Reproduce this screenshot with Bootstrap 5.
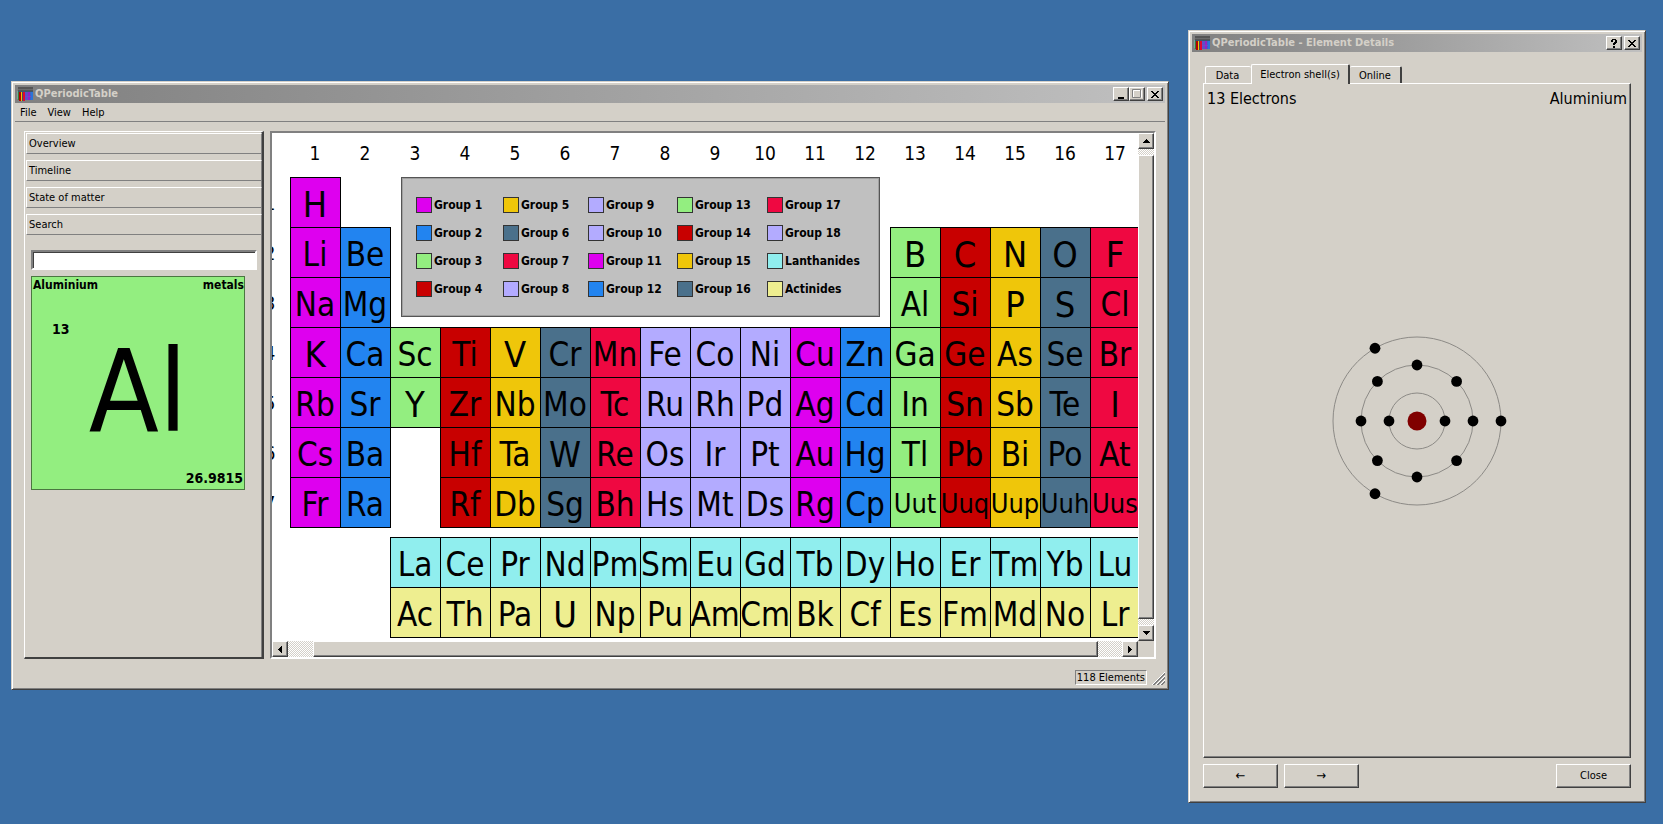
<!DOCTYPE html>
<html lang="en">
<head>
<meta charset="utf-8">
<meta name="viewport" content="width=device-width, initial-scale=1">
<title>QPeriodicTable</title>
<link rel="stylesheet" href="https://cdn.jsdelivr.net/npm/bootstrap@5.3.0/dist/css/bootstrap.min.css">
<style>
  :root { --face: #d4d0c8; --shade: #808080; --dark: #404040; }
  body {
    background: #3a6ea5; color: #000;
    font-family: "DejaVu Sans Condensed", "DejaVu Sans", sans-serif;
    font-size: 11px; line-height: 14px;
  }
  button, input { font: inherit; color: inherit; border-radius: 0; }
  .desktop { padding: 30px 17px 21px 11px; gap: 19px; }
  .raised {
    background: var(--face);
    border: 1px solid; border-color: #fff var(--dark) var(--dark) #fff;
    box-shadow: inset -1px -1px 0 var(--shade);
  }
  .sunken {
    border: 2px solid; border-color: var(--shade) #fff #fff var(--shade);
    box-shadow: inset 1px 1px 0 var(--dark);
  }
  .win {
    background: var(--face); padding: 3px;
    border: 1px solid; border-color: var(--face) var(--dark) var(--dark) var(--face);
    box-shadow: inset 1px 1px 0 #fff, inset -1px -1px 0 var(--shade);
  }
  .win-main { margin-top: 51px; min-width: 0; }
  .win-dialog { flex: 0 0 458px; }
  .titlebar {
    height: 18px; padding: 0 2px; color: var(--face);
    background: linear-gradient(90deg, #808080, #c0c0c0);
  }
  .titlebar h1 { font-size: 11px; line-height: 18px; font-weight: bold; margin: 0 0 0 2px; }
  .tbtn { width: 16px; height: 14px; padding: 0; }
  .tbtn svg, .sbtn svg { display: block; margin: auto; }
  .menubar { height: 19px; border-bottom: 1px solid var(--shade); padding: 0 5px; gap: 11px; }
  .menubar a { color: #000; text-decoration: none; line-height: 20px; }
  .work { padding: 9px 9px 0; gap: 6px; }
  .toolbox {
    flex: 0 0 240px; border: 2px solid; border-color: #fff var(--dark) var(--dark) #fff;
    border-left-width: 1px; border-top-width: 1px; padding: 1px 0 0 1px;
    box-shadow: inset -1px 0 0 var(--shade);
  }
  .toolbox-tabs { gap: 6px; }
  .toolbox-tab {
    height: 21px; padding: 1px 2px 0; text-align: left; background: var(--face);
    border: 1px solid; border-color: #fff var(--shade) var(--shade) #fff;
  }
  .search { padding: 15px 5px 0; }
  .search input { height: 20px; background: #fff; padding: 0 3px; }
  .tile {
    width: 214px; height: 214px; margin-top: 6px; background: #93ee80;
    border: 1px solid #4a7740; font-size: 12px; line-height: 16px; font-weight: bold;
  }
  .tile-head { padding: 0 0 0 1px; }
  .tile-num { font-size: 14px; padding-left: 20px; margin-top: 28px; }
  .tile-sym { font-size: 114px; line-height: 110px; font-weight: normal; }
  .tile-mass { font-size: 14px; padding: 0 1px 3px; }
  .view { background: var(--face); }
  .viewport { background: #fff; overflow: hidden; }
  .scene { margin-left: -32px; width: 900px; padding-bottom: 4px; }
  .elements { border-collapse: separate; border-spacing: 0; table-layout: fixed; width: 900px; line-height: 1; }
  .elements th, .elements td { width: 50px; padding: 0; text-align: center; vertical-align: middle; font-weight: normal; white-space: nowrap; }
  .elements thead th { height: 44px; font-size: 19px; padding-bottom: 3px; }
  .elements tbody tr { height: 50px; }
  .elements tbody th { font-size: 19px; padding: 2px 0 0 10px; }
  .elements tbody tr.gap-row { height: 10px; }
  .elements td.el { font-size: 33px; padding-top: 5px; box-shadow: inset 1px 1px 0 #000, 1px 0 0 #000, 0 1px 0 #000, 1px 1px 0 #000; }
  .elements td.n1 { font-size: 36px; }
  .elements td.n3 { font-size: 27px; padding-top: 3px; }
  .c-mag { background: #de00ef; } .c-blue { background: #2284f0; } .c-green { background: #93ee80; }
  .c-red { background: #c80000; } .c-yel { background: #efc60a; } .c-slate { background: #4a708b; }
  .c-crim { background: #ef0841; } .c-lav { background: #b3abff; }
  .c-lan { background: #90eeee; } .c-act { background: #eeee90; }
  .legend {
    left: 161px; top: 44px; width: 479px; height: 140px; padding: 19px 14px;
    background: #c0c0c0; border: 1px solid #555; box-shadow: inset 0 0 0 1px #a0a0a0;
    display: grid; grid-auto-flow: column; grid-template-rows: repeat(4, 16px);
    grid-template-columns: 87px 85px 89px 90px auto; row-gap: 12px;
    font-size: 12px; line-height: 16px; font-weight: bold; white-space: nowrap;
  }
  .swatch { width: 16px; height: 16px; border: 1px solid #333; margin-right: 2px; }
  .track { background: repeating-conic-gradient(#fff 0 25%, #d4d0c8 0 50%) 0 0 / 2px 2px; }
  .vbar { width: 16px; } .hbar { height: 16px; }
  .sbtn { width: 16px; height: 16px; padding: 0; flex: none; }
  .vthumb { margin: 6px 0; } .hthumb { margin: 0 24px 0 25px; }
  .corner { width: 16px; }
  .statusbar { padding: 11px 0 0; height: 27px; }
  .status-text { height: 15px; padding: 0 1px; margin-right: 5px; border: 1px solid; border-color: var(--shade) #fff #fff var(--shade); }
  .dialog-body { padding: 12px 11px 11px; }
  .tabs { padding-left: 2px; height: 19px; }
  .tabs button { background: var(--face); border: 1px solid; border-color: #fff var(--dark) transparent #fff; border-bottom: 0; border-radius: 2px 2px 0 0; padding: 0 8px; height: 17px; line-height: 18px; }
  .tabs .t-data { width: 46px; border-right: 0; padding: 0 6px 0 4px; }
  .tabs .t-shell { width: 99px; height: 20px; margin-bottom: -1px; z-index: 1; border-right-width: 2px; line-height: 20px; }
  .tabs .t-online { width: 52px; border-left: 0; border-right-width: 2px; }
  .pane { display: grid; }
  .pane > * { grid-area: 1 / 1; }
  .pane-head { font-size: 16px; line-height: 20px; padding: 5px 3px; }
  .push { width: 75px; height: 24px; padding: 0; }
  .arrow-btn { font-size: 13px; }
  .footer-row { gap: 6px; margin-top: 6px; }
</style>
</head>
<body>
<svg width="0" height="0" class="position-absolute" aria-hidden="true">
  <symbol id="app" viewBox="0 0 16 14">
    <rect x="1" width="15" height="5" fill="#555"/><rect x="1" y="2" width="15" height="1" fill="#6b6b6b"/>
    <rect x="1" y="4" width="15" height="1" fill="#3a5570"/>
    <rect y="4" width="1" height="8" fill="#7a9"/><rect x="1" y="5" width="1" height="8" fill="#397a35"/>
    <rect x="2" y="5" width="2" height="9" fill="#b50000"/><rect x="4" y="5" width="1" height="9" fill="#efc60a"/>
    <rect x="5" y="5" width="1" height="9" fill="#4a4a5b"/><rect x="6" y="5" width="2" height="9" fill="#e00830"/>
    <rect x="8" y="5" width="3" height="8" fill="#5c50c8"/><rect x="11" y="5" width="2" height="8" fill="#9a20c0"/>
    <rect x="13" y="5" width="1" height="8" fill="#3b62c8"/><rect x="14" y="5" width="2" height="8" fill="#2a73d8"/>
    <rect x="8" y="9" width="6" height="1" fill="#7a40c8"/>
  </symbol>
  <symbol id="cross" viewBox="0 0 8 7"><path shape-rendering="crispEdges" d="M0 0h2v1h1v1h2V1h1V0h2v1H7v1H6v1H5v1h1v1h1v1h1v1H6V6H5V5H3v1H2v1H0V6h1V5h1V4h1V3H2V2H1V1H0z"/></symbol>
</svg>

<div class="desktop d-flex min-vh-100">
  <main class="win win-main flex-fill align-self-start">
    <header class="titlebar d-flex align-items-center">
      <svg width="16" height="14"><use href="#app"/></svg>
      <h1 class="flex-fill">QPeriodicTable</h1>
      <button class="raised tbtn" aria-label="Minimize"><svg width="12" height="10"><path d="M3 8h6v2H3z"/></svg></button>
      <button class="raised tbtn" aria-label="Maximize"><svg width="12" height="10"><path d="M2.500 1.500h8v7h-8z" fill="none" stroke="#fff"/><path d="M1.500 .5h8v8h-8z" fill="none" stroke="#808080"/></svg></button>
      <button class="raised tbtn" style="margin-left:2px" aria-label="Close"><svg width="8" height="7"><use href="#cross"/></svg></button>
    </header>
    <nav class="menubar d-flex"><a href="#">File</a><a href="#">View</a><a href="#">Help</a></nav>
    <div class="work d-flex">
      <aside class="toolbox">
        <div class="toolbox-tabs d-flex flex-column">
          <button class="toolbox-tab">Overview</button>
          <button class="toolbox-tab">Timeline</button>
          <button class="toolbox-tab">State of matter</button>
          <button class="toolbox-tab">Search</button>
        </div>
        <div class="search">
          <input class="sunken d-block w-100" type="text" aria-label="Search">
          <section class="tile d-flex flex-column">
            <div class="tile-head d-flex justify-content-between"><span>Aluminium</span><span>metals</span></div>
            <div class="tile-num">13</div>
            <div class="tile-sym text-center">Al</div>
            <div class="tile-mass text-end mt-auto">26.9815</div>
          </section>
        </div>
      </aside>
      <section class="view sunken flex-fill d-flex flex-column overflow-hidden">
        <div class="d-flex">
          <div class="viewport flex-fill">
            <div class="scene position-relative">
              <table class="elements" id="elements"></table>
              <ul class="legend position-absolute list-unstyled m-0" id="legend"></ul>
            </div>
          </div>
          <div class="vbar track d-flex flex-column flex-shrink-0">
            <button class="raised sbtn" aria-label="Scroll up"><svg width="7" height="4"><path d="M3 0h1v1h1v1h1v1h1v1H0V3h1V2h1V1h1z"/></svg></button>
            <div class="raised vthumb flex-fill"></div>
            <button class="raised sbtn" aria-label="Scroll down"><svg width="7" height="4"><path d="M0 0h7v1H6v1H5v1H4v1H3V3H2V2H1V1H0z"/></svg></button>
          </div>
        </div>
        <div class="d-flex">
          <div class="hbar track d-flex flex-fill">
            <button class="raised sbtn" aria-label="Scroll left"><svg width="4" height="7"><path d="M4 0v7H3V6H2V5H1V4H0V3h1V2h1V1h1V0z"/></svg></button>
            <div class="raised hthumb flex-fill"></div>
            <button class="raised sbtn" aria-label="Scroll right"><svg width="4" height="7"><path d="M0 0v7h1V6h1V5h1V4h1V3H3V2H2V1H1V0z"/></svg></button>
          </div>
          <div class="corner"></div>
        </div>
      </section>
    </div>
    <footer class="statusbar d-flex justify-content-end">
      <div class="status-text">118 Elements</div>
      <svg width="13" height="14" aria-hidden="true" style="margin-top:2px">
        <path d="M0 13 13 0M4 13l9-9M8 13l5-5" stroke="#fff"/>
        <path d="M1 13 13 1M2 13 13 2M5 13l8-8M6 13l7-7M9 13l4-4M10 13l3-3" stroke="#808080"/>
      </svg>
    </footer>
  </main>

  <section class="win win-dialog d-flex flex-column">
    <header class="titlebar d-flex align-items-center">
      <svg width="16" height="14"><use href="#app"/></svg>
      <h1 class="flex-fill">QPeriodicTable - Element Details</h1>
      <button class="raised tbtn" aria-label="Help"><svg width="7" height="9" shape-rendering="crispEdges"><path d="M1 0h4v1h1v3H5v1H4v1H2V4h1V3h1V1H2v2H0V1h1zM2 7h2v2H2z"/></svg></button>
      <button class="raised tbtn" style="margin-left:2px" aria-label="Close"><svg width="8" height="7"><use href="#cross"/></svg></button>
    </header>
    <div class="dialog-body d-flex flex-column flex-fill">
      <div class="tabs d-flex align-items-end" role="tablist">
        <button class="t-data" role="tab">Data</button>
        <button class="t-shell position-relative" role="tab" aria-selected="true">Electron shell(s)</button>
        <button class="t-online" role="tab">Online</button>
      </div>
      <div class="pane raised flex-fill" role="tabpanel">
        <div class="pane-head d-flex justify-content-between align-self-start"><span>13 Electrons</span><span>Aluminium</span></div>
        <svg class="m-auto" width="180" height="180" viewBox="-90 -90 180 180" role="img" aria-label="Electron shells 2, 8, 3">
          <g fill="none" stroke="#8c8a86"><circle r="28"/><circle r="56"/><circle r="84"/></g>
          <circle r="9.500" fill="#800000"/>
          <g id="electrons"></g>
        </svg>
      </div>
      <div class="footer-row d-flex align-items-start">
        <button class="raised push arrow-btn" aria-label="Previous">←</button>
        <button class="raised push arrow-btn" aria-label="Next">→</button>
        <button class="raised push ms-auto">Close</button>
      </div>
    </div>
  </section>
</div>

<script>
  const groups = ["mag","blue","green","red","yel","slate","crim","lav","lav","lav","mag","blue","green","red","yel","slate","crim","lav"];
  // One string per period; a dot is an empty place.
  const periods = [
    "H . . . . . . . . . . . . . . . .",
    "Li Be . . . . . . . . . . B C N O F",
    "Na Mg . . . . . . . . . . Al Si P S Cl",
    "K Ca Sc Ti V Cr Mn Fe Co Ni Cu Zn Ga Ge As Se Br",
    "Rb Sr Y Zr Nb Mo Tc Ru Rh Pd Ag Cd In Sn Sb Te I",
    "Cs Ba . Hf Ta W Re Os Ir Pt Au Hg Tl Pb Bi Po At",
    "Fr Ra . Rf Db Sg Bh Hs Mt Ds Rg Cp Uut Uuq Uup Uuh Uus"
  ];
  const series = [
    [". . La Ce Pr Nd Pm Sm Eu Gd Tb Dy Ho Er Tm Yb Lu", "lan"],
    [". . Ac Th Pa U Np Pu Am Cm Bk Cf Es Fm Md No Lr", "act"]
  ];
  const row = (list, label, color) => "<tr>" + label + list.split(" ").map((s, i) =>
    s === "." ? "<td></td>" : `<td class="el n${s.length} c-${color || groups[i]}">${s}</td>`).join("") + "</tr>";
  document.getElementById("elements").innerHTML =
    "<thead><tr><td></td>" + periods[0].split(" ").map((_, i) => `<th scope="col">${i + 1}</th>`).join("") + "</tr></thead><tbody>" +
    periods.map((p, i) => row(p, `<th scope="row">${i + 1}</th>`)).join("") +
    '<tr class="gap-row"><td colspan="18"></td></tr>' +
    series.map(([list, color]) => row(list, "<td></td>", color)).join("") + "</tbody>";

  const entries = groups.map((c, i) => [c, "Group " + (i + 1)]).concat([["lan", "Lanthanides"], ["act", "Actinides"]]);
  document.getElementById("legend").innerHTML = entries.map(([c, t]) =>
    `<li class="d-flex"><span class="swatch c-${c}"></span>${t}</li>`).join("");

  document.getElementById("electrons").innerHTML = [2, 8, 3].map((count, shell) =>
    Array.from({ length: count }, (_, k) => {
      const a = 2 * Math.PI * k / count, r = 28 * (shell + 1);
      return `<circle cx="${r * Math.cos(a)}" cy="${r * Math.sin(a)}" r="5.400"/>`;
    }).join("")).join("");
</script>
<script src="https://cdn.jsdelivr.net/npm/bootstrap@5.3.0/dist/js/bootstrap.bundle.min.js"></script>
</body>
</html>
